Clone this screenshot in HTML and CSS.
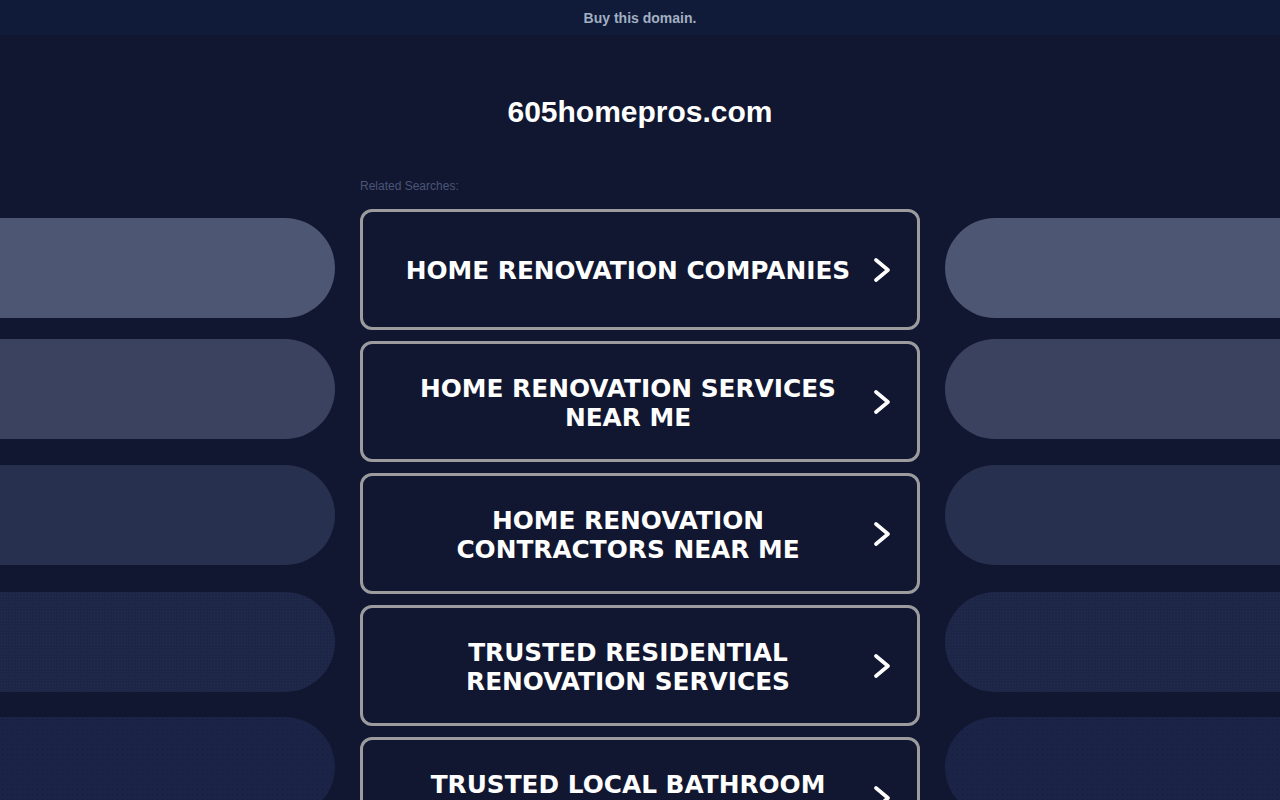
FILE: index.html
```html
<!DOCTYPE html>
<html lang="en">
<head>
<meta charset="utf-8">
<title>605homepros.com</title>
<link rel="stylesheet" href="styles.css">
</head>
<body>
<div class="topbar"><a class="buy" href="#">Buy this domain.</a></div>
<h1 class="domain">605homepros.com</h1>
<div class="main">
  <div class="pills pills-left">
    <div class="pill p1"></div>
    <div class="pill p2"></div>
    <div class="pill p3"></div>
    <div class="pill p4"></div>
    <div class="pill p5"></div>
  </div>
  <div class="content">
    <div class="related">Related Searches:</div>
    <div class="list">
      <a class="btn" href="#"><span class="label">HOME RENOVATION COMPANIES</span><svg class="chev" viewBox="0 0 20 24" width="20" height="24"><polyline points="4,2 16,12 4,22"/></svg></a>
      <a class="btn" href="#"><span class="label">HOME RENOVATION SERVICES NEAR ME</span><svg class="chev" viewBox="0 0 20 24" width="20" height="24"><polyline points="4,2 16,12 4,22"/></svg></a>
      <a class="btn" href="#"><span class="label">HOME RENOVATION CONTRACTORS NEAR ME</span><svg class="chev" viewBox="0 0 20 24" width="20" height="24"><polyline points="4,2 16,12 4,22"/></svg></a>
      <a class="btn" href="#"><span class="label">TRUSTED RESIDENTIAL RENOVATION SERVICES</span><svg class="chev" viewBox="0 0 20 24" width="20" height="24"><polyline points="4,2 16,12 4,22"/></svg></a>
      <a class="btn" href="#"><span class="label">TRUSTED LOCAL BATHROOM REMODELERS</span><svg class="chev" viewBox="0 0 20 24" width="20" height="24"><polyline points="4,2 16,12 4,22"/></svg></a>
    </div>
  </div>
  <div class="pills pills-right">
    <div class="pill p1"></div>
    <div class="pill p2"></div>
    <div class="pill p3"></div>
    <div class="pill p4"></div>
    <div class="pill p5"></div>
  </div>
</div>
</body>
</html>
```
FILE: styles.css
```css
html, body {
  margin: 0;
  padding: 0;
  background: #111730;
  height: 800px;
  overflow: hidden;
}
body {
  font-family: "Liberation Sans", Arial, sans-serif;
}
.topbar {
  height: 35px;
  background: #0f1b38;
  display: flex;
  justify-content: center;
  align-items: center;
}
.buy {
  color: #a3afc2;
  font-size: 14px;
  font-weight: bold;
  text-decoration: none;
  line-height: 16px;
}
.domain {
  margin: 60px 0 0 0;
  height: 33px;
  line-height: 33px;
  text-align: center;
  color: #ffffff;
  font-size: 30px;
  font-weight: bold;
}
.main {
  margin-top: 51px;
  display: grid;
  grid-template-columns: 335px 560px 335px;
  column-gap: 25px;
}
.pills {
  padding-top: 39px;
  display: flex;
  flex-direction: column;
  gap: 26px;
}
.pill {
  height: 100px;
  flex: none;
}
.pills-left .pill { border-radius: 0 50px 50px 0; }
.pills-right .pill { border-radius: 50px 0 0 50px; }
.p1 { background: #4d5672; margin-bottom: -5px; }
.p2 { background: #3a4260; }
.p3 { background: #283050; margin-bottom: 1px; }
.p4 {
  background-color: #1d2647;
  background-image: radial-gradient(rgba(70, 85, 130, 0.18) 0.5px, transparent 0.8px);
  background-size: 3px 3px;
  margin-bottom: -1px;
}
.p5 {
  background-color: #1b2446;
  background-image: radial-gradient(rgba(10, 15, 35, 0.35) 0.6px, transparent 0.9px);
  background-size: 5px 5px;
}
.related {
  color: #4b5577;
  font-size: 12px;
  line-height: 14px;
  height: 14px;
  margin-bottom: 16px;
}
.list {
  display: flex;
  flex-direction: column;
  gap: 11px;
}
.btn {
  box-sizing: border-box;
  height: 121px;
  border: 3px solid #9c9c9f;
  border-radius: 12px;
  display: flex;
  align-items: center;
  padding: 0 25px 0 30px;
  text-decoration: none;
  flex: none;
}
.label {
  width: 470px;
  flex: none;
  text-align: center;
  color: #ffffff;
  font-family: "DejaVu Sans", Verdana, sans-serif;
  font-weight: bold;
  font-size: 24.8px;
  line-height: 29px;
  margin-top: 2px;
}
.chev {
  margin-left: 9px;
  flex: none;
  fill: none;
  stroke: #ffffff;
  stroke-width: 3.6;
  stroke-linecap: round;
  stroke-linejoin: round;
}
```
